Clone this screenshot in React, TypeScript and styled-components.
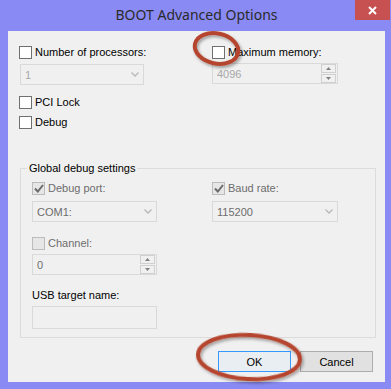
import React from "react";
import styled, { createGlobalStyle } from "styled-components";

const GlobalStyle = createGlobalStyle`
  body { margin: 0; background: #fff; }
`;

const Window = styled.div`
  position: relative;
  width: 391px;
  height: 389px;
  box-sizing: border-box;
  padding: 0 6px 7px 8px;
  display: flex;
  flex-direction: column;
  background: #8a8af4;
  font-family: "Liberation Sans", Arial, sans-serif;
  font-size: 11px;
  color: #000;
`;

const TitleBar = styled.div`
  height: 31px;
  display: grid;
  grid-template-columns: 1fr auto 1fr;
`;

const Title = styled.div`
  grid-column: 2;
  align-self: center;
  margin-top: -2px;
  font-family: "Noto Sans", sans-serif;
  font-size: 14px;
  color: #2b2b2b;
`;

const CloseButton = styled.div`
  grid-column: 3;
  justify-self: end;
  width: 35px;
  height: 20px;
  margin-right: -5px;
  background: #c75050;
  display: flex;
  align-items: center;
  justify-content: center;
`;

const Client = styled.div`
  flex: 1;
  background: #f0f0f0;
  padding: 15px 9px 0 11px;
  display: flex;
  flex-direction: column;
`;

const TopGrid = styled.div`
  display: grid;
  grid-template-columns: 193px 1fr;
`;

const Column = styled.div`
  display: flex;
  flex-direction: column;
`;

const CheckRow = styled.label<{ $top?: number }>`
  display: flex;
  align-items: center;
  gap: 3px;
  height: 13px;
  margin-top: ${(p) => p.$top ?? 0}px;
`;

const Box = styled.span<{ $disabled?: boolean }>`
  width: 11px;
  height: 11px;
  flex: none;
  border: 1px solid ${(p) => (p.$disabled ? "#bcbcbc" : "#707070")};
  background: ${(p) => (p.$disabled ? "#e6e6e6" : "#fff")};
  display: flex;
  align-items: center;
  justify-content: center;
`;

const LabelText = styled.span<{ $disabled?: boolean }>`
  line-height: 13px;
  color: ${(p) => (p.$disabled ? "#6d6d6d" : "#000")};
`;

const Field = styled.div<{ $width: number; $top: number; $left?: number; $height?: number }>`
  position: relative;
  box-sizing: border-box;
  width: ${(p) => p.$width}px;
  height: ${(p) => p.$height ?? 21}px;
  margin-top: ${(p) => p.$top}px;
  margin-left: ${(p) => p.$left ?? 0}px;
  border: 1px solid #d9d9d9;
  background: #f0f0f0;
  display: flex;
  align-items: center;
  padding-left: 4px;
`;

const FieldText = styled.span<{ $faint?: boolean }>`
  flex: 1;
  color: ${(p) => (p.$faint ? "#a8a8a8" : "#6d6d6d")};
`;

const Chevron = styled.span`
  width: 17px;
  display: flex;
  justify-content: center;
`;

const SpinButtons = styled.div`
  display: flex;
  flex-direction: column;
  gap: 1px;
  margin-right: 1px;
`;

const SpinButton = styled.div`
  box-sizing: border-box;
  width: 15px;
  height: 9px;
  border: 1px solid #d0d0d0;
  display: flex;
  align-items: center;
  justify-content: center;
`;

const Group = styled.fieldset`
  margin: 32px 0 0 1px;
  padding: 7px 0 8px 11px;
  border: 1px solid #dcdcdc;
  min-width: 0;
`;

const Legend = styled.legend`
  margin-left: -5px;
  padding: 0 2px;
  line-height: 14px;
`;

const GroupGrid = styled.div`
  display: grid;
  grid-template-columns: 180px 1fr;
`;

const PlainLabel = styled.div<{ $top: number }>`
  margin-top: ${(p) => p.$top}px;
  line-height: 14px;
`;

const ButtonRow = styled.div`
  display: flex;
  justify-content: flex-end;
  gap: 9px;
  margin-top: 13px;
  padding-right: 3px;
`;

const Button = styled.div<{ $default?: boolean }>`
  box-sizing: border-box;
  width: 73px;
  height: 21px;
  display: flex;
  align-items: center;
  justify-content: center;
  border: 1px solid ${(p) => (p.$default ? "#3399ff" : "#adadad")};
  background: ${(p) => (p.$default ? "#e9eef3" : "#e1e1e1")};
`;

const Markup = styled.svg`
  position: absolute;
  left: 0;
  top: 0;
  pointer-events: none;
`;

function Check({ label, disabled, checked, top }: { label: string; disabled?: boolean; checked?: boolean; top?: number }) {
  return (
    <CheckRow $top={top}>
      <Box $disabled={disabled}>
        {checked && (
          <svg width="10" height="9" viewBox="0 0 10 9">
            <path d="M1 4.5 L3.8 7.5 L9 1" fill="none" stroke="#6a6a6a" strokeWidth="2" />
          </svg>
        )}
      </Box>
      <LabelText $disabled={disabled}>{label}</LabelText>
    </CheckRow>
  );
}

function Combo({ value, width, top, left, faint }: { value: string; width: number; top: number; left?: number; faint?: boolean }) {
  return (
    <Field $width={width} $top={top} $left={left}>
      <FieldText $faint={faint}>{value}</FieldText>
      <Chevron>
        <svg width="8" height="5" viewBox="0 0 8 5">
          <path d="M0.5 0.5 L4 4 L7.5 0.5" fill="none" stroke="#b8b8b8" strokeWidth="1.3" />
        </svg>
      </Chevron>
    </Field>
  );
}

function Spinner({ value, width, top, faint }: { value: string; width: number; top: number; faint?: boolean }) {
  return (
    <Field $width={width} $top={top}>
      <FieldText $faint={faint}>{value}</FieldText>
      <SpinButtons>
        <SpinButton>
          <svg width="5" height="3" viewBox="0 0 5 3">
            <path d="M0 3 L2.5 0 L5 3 Z" fill="#808080" />
          </svg>
        </SpinButton>
        <SpinButton>
          <svg width="5" height="3" viewBox="0 0 5 3">
            <path d="M0 0 L2.5 3 L5 0 Z" fill="#808080" />
          </svg>
        </SpinButton>
      </SpinButtons>
    </Field>
  );
}

export default function App() {
  return (
    <>
      <GlobalStyle />
      <Window>
        <TitleBar>
          <Title>BOOT Advanced Options</Title>
          <CloseButton>
            <svg width="9" height="9" viewBox="0 0 9 9">
              <path d="M1 1 L8 8 M8 1 L1 8" stroke="#fff" strokeWidth="2" />
            </svg>
          </CloseButton>
        </TitleBar>
        <Client>
          <TopGrid>
            <Column>
              <Check label="Number of processors:" />
              <Combo value="1" width={124} top={5} left={1} faint />
              <Check label="PCI Lock" top={11} />
              <Check label="Debug" top={7} />
            </Column>
            <Column>
              <Check label="Maximum memory:" />
              <Spinner value="4096" width={126} top={4} faint />
            </Column>
          </TopGrid>

          <Group>
            <Legend>Global debug settings</Legend>
            <GroupGrid>
              <Column>
                <Check label="Debug port:" disabled checked />
                <Combo value="COM1:" width={125} top={6} />
                <Check label="Channel:" disabled top={15} />
                <Spinner value="0" width={125} top={4} />
                <PlainLabel $top={13}>USB target name:</PlainLabel>
                <Field $width={125} $top={4} $height={23} />
              </Column>
              <Column>
                <Check label="Baud rate:" disabled checked />
                <Combo value="115200" width={126} top={6} />
              </Column>
            </GroupGrid>
          </Group>

          <ButtonRow>
            <Button $default>OK</Button>
            <Button>Cancel</Button>
          </ButtonRow>
        </Client>

        {/* red annotation rings drawn over the dialog */}
        <Markup width="391" height="389" viewBox="0 0 391 389">
          <defs>
            <filter id="ringShadow" x="-20%" y="-20%" width="140%" height="140%">
              <feDropShadow dx="1.5" dy="2" stdDeviation="1.5" floodColor="#000" floodOpacity="0.35" />
            </filter>
          </defs>
          <g fill="none" stroke="#b5452d" strokeWidth="4" filter="url(#ringShadow)">
            <ellipse cx="216.5" cy="48.5" rx="22" ry="15" transform="rotate(12 216.5 48.5)" />
            <ellipse cx="249" cy="357" rx="51" ry="22" transform="rotate(3 249 357)" />
          </g>
        </Markup>
      </Window>
    </>
  );
}
